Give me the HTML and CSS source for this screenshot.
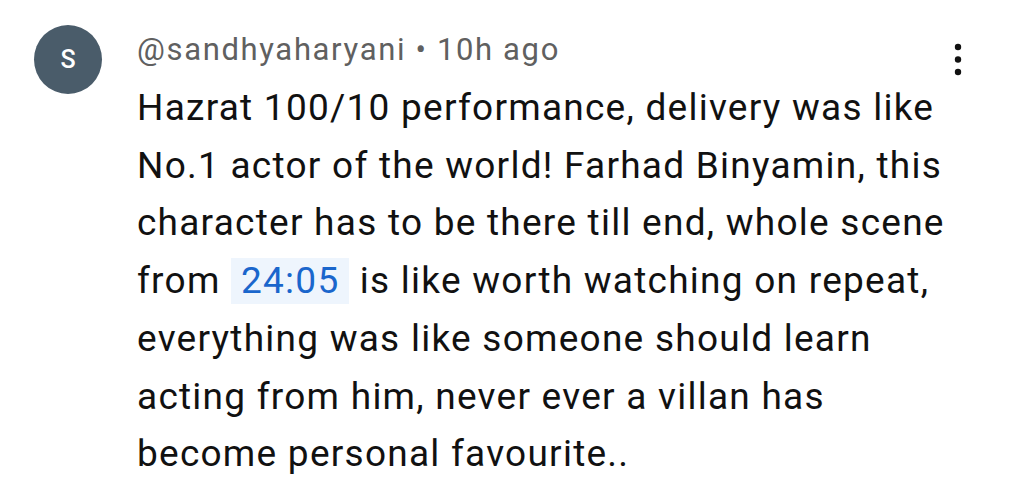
FILE: index.html
```html
<!DOCTYPE html>
<html>
<head>
<meta charset="utf-8">
<link rel="stylesheet" href="styles.css">
</head>
<body>
<div class="comment">
  <div class="avatar">S</div>
  <div class="content">
    <div class="meta">@sandhyaharyani • 10h ago</div>
    <p class="text">Hazrat 100/10 performance, delivery was like No.1 actor of the world! Farhad Binyamin, this character has to be there till end, whole scene from <span class="chip">24:05</span> is like worth watching on repeat, everything was like someone should learn acting from him, never ever a villan has become personal favourite..</p>
  </div>
  <div class="menu">
    <svg width="8" height="34" viewBox="0 0 8 34"><circle cx="4" cy="4" r="3.2" fill="#111"/><circle cx="4" cy="16.5" r="3.2" fill="#111"/><circle cx="4" cy="29" r="3.2" fill="#111"/></svg>
  </div>
</div>
</body>
</html>
```
FILE: styles.css
```css
html, body {
  margin: 0;
  padding: 0;
  background: #ffffff;
}
body {
  font-family: Roboto, "Liberation Sans", sans-serif;
  width: 1024px;
  height: 499px;
  overflow: hidden;
}
.comment {
  display: flex;
  align-items: flex-start;
  padding: 25px 0 0 34px;
}
.avatar {
  flex: none;
  width: 68px;
  height: 69px;
  border-radius: 50%;
  background: #4a5c6a;
  color: #ffffff;
  font-size: 25px;
  font-weight: 500;
  display: flex;
  align-items: center;
  justify-content: center;
}
.content {
  margin-left: 35px;
  margin-top: 5px;
  width: 812px;
}
.meta {
  color: #606060;
  font-size: 31px;
  letter-spacing: 1.65px;
  line-height: 40px;
  margin-bottom: 9px;
}
.text {
  margin: 0;
  color: #111111;
  font-size: 37px;
  letter-spacing: 1.25px;
  line-height: 57.7px;
}
.chip {
  background: #eef5fd;
  color: #1a66cc;
  padding: 1px 10px 2px;
}
.menu {
  flex: none;
  margin-left: 5px;
  margin-top: 18px;
}
```
